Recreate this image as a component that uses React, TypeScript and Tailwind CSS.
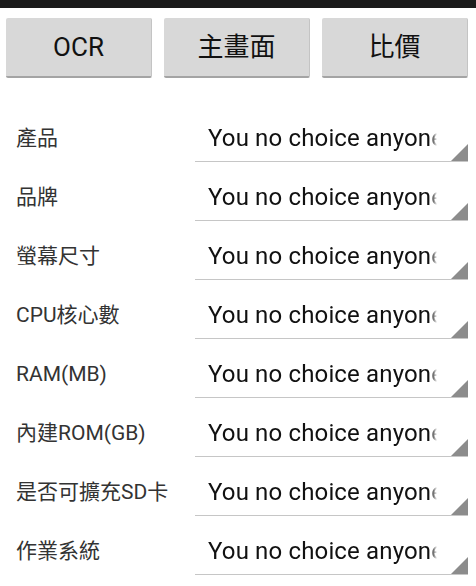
import React from "react";

const rows = [
  "產品",
  "品牌",
  "螢幕尺寸",
  "CPU核心數",
  "RAM(MB)",
  "內建ROM(GB)",
  "是否可擴充SD卡",
  "作業系統",
];

const font = "font-['Roboto','Noto_Sans_CJK_TC',sans-serif]";

function Btn({ label }: { label: string }) {
  return (
    <div
      className={`w-[146px] h-[60px] flex items-center justify-center bg-[#d8d8d8] border-b-2 border-b-[#a4a4a4] border-r border-r-[#c4c4c4] rounded-[2px] text-[26px] text-[#111] ${font}`}
    >
      {label}
    </div>
  );
}

export default function App() {
  return (
    <div className={`w-[476px] h-[586px] bg-white overflow-hidden ${font}`}>
      <div className="h-[8px] bg-[#1b1b1b]" />
      <div className="flex gap-[12px] pl-[6px] pt-[10px]">
        <Btn label="OCR" />
        <Btn label="主畫面" />
        <Btn label="比價" />
      </div>
      <div className="pt-[25px] flex flex-col">
        {rows.map((r) => (
          <div key={r} className="flex pt-[12px] pl-[16px] pr-[8px]">
            <div className="w-[179px] shrink-0 h-[47px] flex items-center text-[21px] text-[#333]">
              {r}
            </div>
            <div className="flex-1 min-w-0 h-[47px] flex items-end border-b border-[#c6c6c6]">
              <div className="flex-1 min-w-0 h-full flex items-center pl-[13px] pr-[14px] overflow-hidden">
                <div className="w-full overflow-hidden whitespace-nowrap text-[24px] tracking-[0.15px] text-[#111] [mask-image:linear-gradient(to_right,black_calc(100%-6px),transparent)]">
                  You no choice anyone
                </div>
              </div>
              <svg width="17" height="17" viewBox="0 0 17 17" className="block shrink-0">
                <polygon points="17,0 17,17 0,17" fill="#8c8c8c" />
              </svg>
            </div>
          </div>
        ))}
      </div>
    </div>
  );
}
